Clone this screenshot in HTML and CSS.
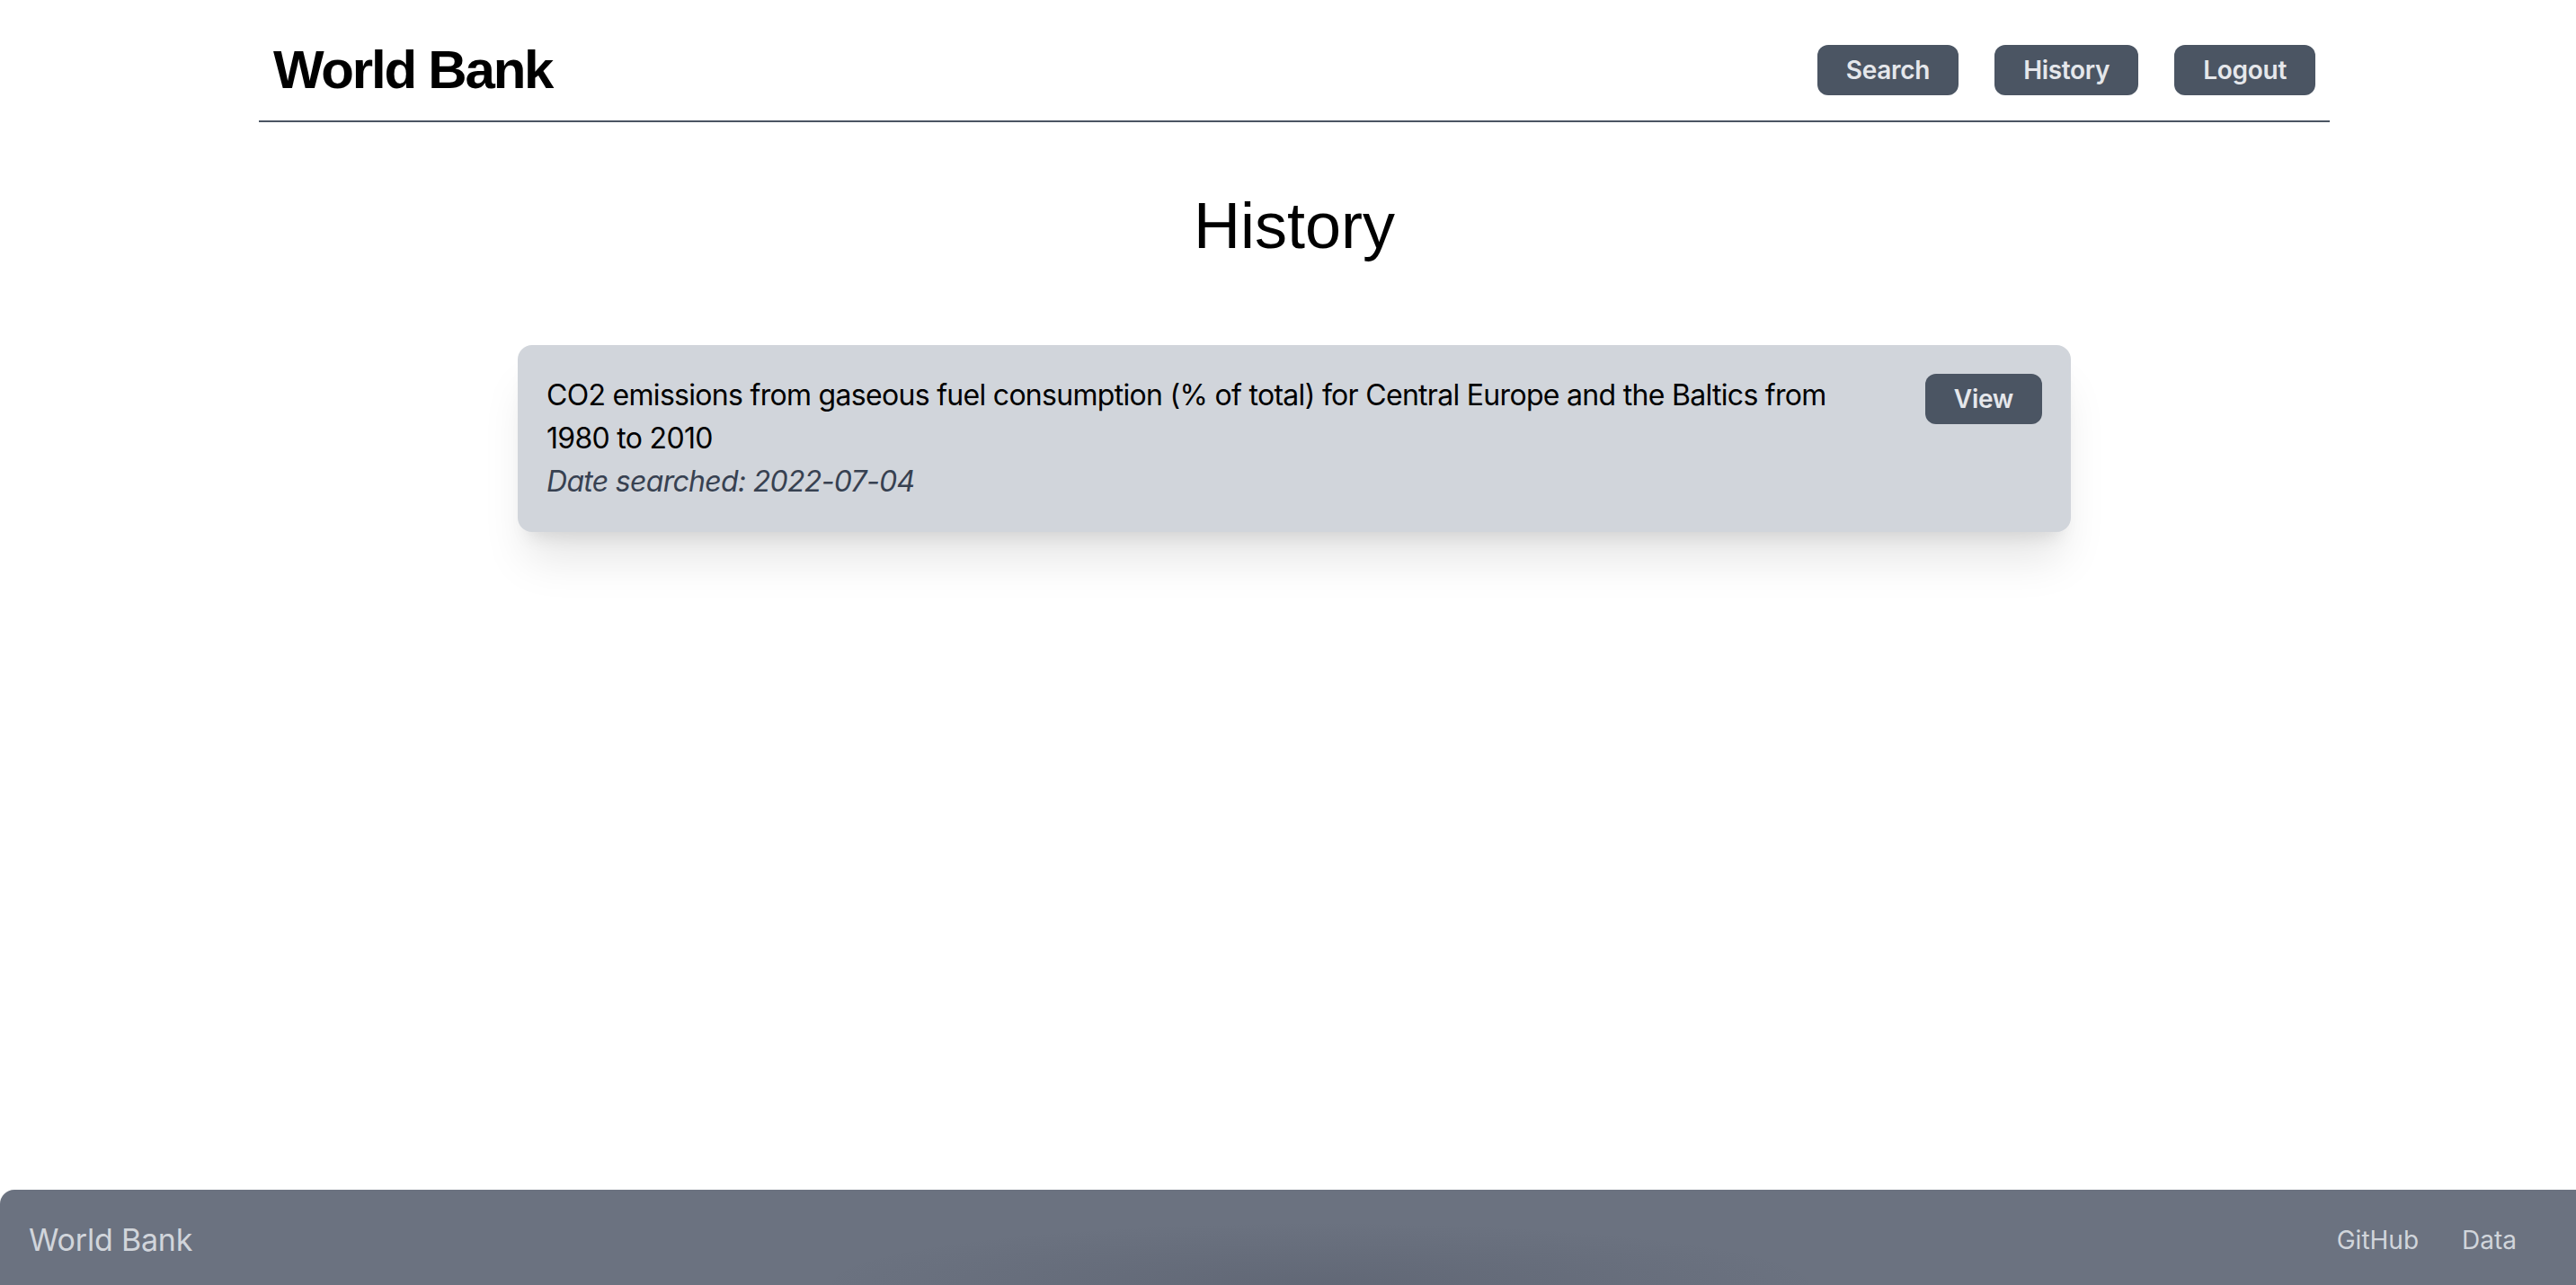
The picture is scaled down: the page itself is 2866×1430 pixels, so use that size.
FILE: index.html
```html
<!DOCTYPE html>
<html lang="en">
<head>
<meta charset="utf-8">
<title>World Bank - History</title>
<link rel="stylesheet" href="styles.css">
</head>
<body>
<div class="page">
  <nav class="nav">
    <a class="brand" href="#">World Bank</a>
    <div class="nav-actions">
      <button class="btn">Search</button>
      <button class="btn">History</button>
      <button class="btn">Logout</button>
    </div>
  </nav>
  <main class="main">
    <h1 class="title">History</h1>
    <div class="card">
      <div class="card-text">
        <p class="query">CO2 emissions from gaseous fuel consumption (% of total) for Central Europe and the Baltics from 1980 to 2010</p>
        <p class="date">Date searched: 2022-07-04</p>
      </div>
      <button class="btn btn-view">View</button>
    </div>
  </main>
  <footer class="footer">
    <span class="footer-brand">World Bank</span>
    <ul class="footer-links">
      <li><a href="#">GitHub</a></li>
      <li><a href="#">Data</a></li>
    </ul>
  </footer>
</div>
</body>
</html>
```
FILE: styles.css
```css
html, body {
  margin: 0;
  padding: 0;
  overflow: hidden;
  background: #ffffff;
}
body {
  font-family: Inter, "Noto Sans", sans-serif;
}
.page {
  width: 2880px;
  min-height: 1430px;
  display: flex;
  flex-direction: column;
}
.nav {
  box-sizing: border-box;
  width: 2304px;
  margin: 0 auto;
  padding: 42px 16px 20px;
  display: flex;
  align-items: center;
  justify-content: space-between;
  border-bottom: 2px solid #4b5563;
}
.brand {
  font-family: "Liberation Sans", Arial, sans-serif;
  font-weight: 700;
  font-size: 60px;
  line-height: 72px;
  letter-spacing: -2.2px;
  color: #000;
  text-decoration: none;
}
.nav-actions {
  display: flex;
  gap: 40px;
}
.btn {
  height: 56px;
  padding: 0 32px;
  border: none;
  border-radius: 12px;
  background: #4b5563;
  color: #e5e7eb;
  font-family: Inter, sans-serif;
  font-weight: 600;
  font-size: 28px;
  line-height: 40px;
  letter-spacing: -0.3px;
  cursor: pointer;
}
.main {
  flex: 1;
}
.title {
  margin: 75px 0 0;
  text-align: center;
  font-family: "Liberation Sans", Arial, sans-serif;
  font-weight: 400;
  font-size: 72px;
  line-height: 80px;
  color: #000;
}
.card {
  box-sizing: border-box;
  width: 1728px;
  margin: 93px auto 0;
  padding: 32px;
  display: flex;
  gap: 32px;
  align-items: flex-start;
  background: #d1d5db;
  border-radius: 16px;
  box-shadow: 0 40px 50px -10px rgba(0, 0, 0, 0.1), 0 16px 20px -12px rgba(0, 0, 0, 0.1);
}
.card-text {
  flex: 1;
  font-size: 32px;
  line-height: 48px;
  letter-spacing: -0.7px;
  color: #000;
}
.query, .date {
  margin: 0;
}
.date {
  font-style: italic;
  color: #374151;
}
.btn-view {
  flex: none;
}
.footer {
  box-sizing: border-box;
  height: 106px;
  padding: 6px 32px 0;
  display: flex;
  align-items: center;
  justify-content: space-between;
  border-radius: 16px 16px 0 0;
  background:
    radial-gradient(ellipse 560px 70px at 51% 100%, rgba(40, 44, 60, 0.15), rgba(40, 44, 60, 0) 100%),
    #6b7280;
  box-shadow: 0 1px 3px rgba(0, 0, 0, 0.1);
}
.footer-brand {
  font-size: 34px;
  line-height: 48px;
  letter-spacing: -0.2px;
  color: #d1d5db;
}
.footer-links {
  display: flex;
  margin: 0;
  padding: 0;
  list-style: none;
}
.footer-links li {
  margin-right: 48px;
}
.footer-links a {
  font-size: 28px;
  line-height: 40px;
  color: #d1d5db;
  text-decoration: none;
}
```
